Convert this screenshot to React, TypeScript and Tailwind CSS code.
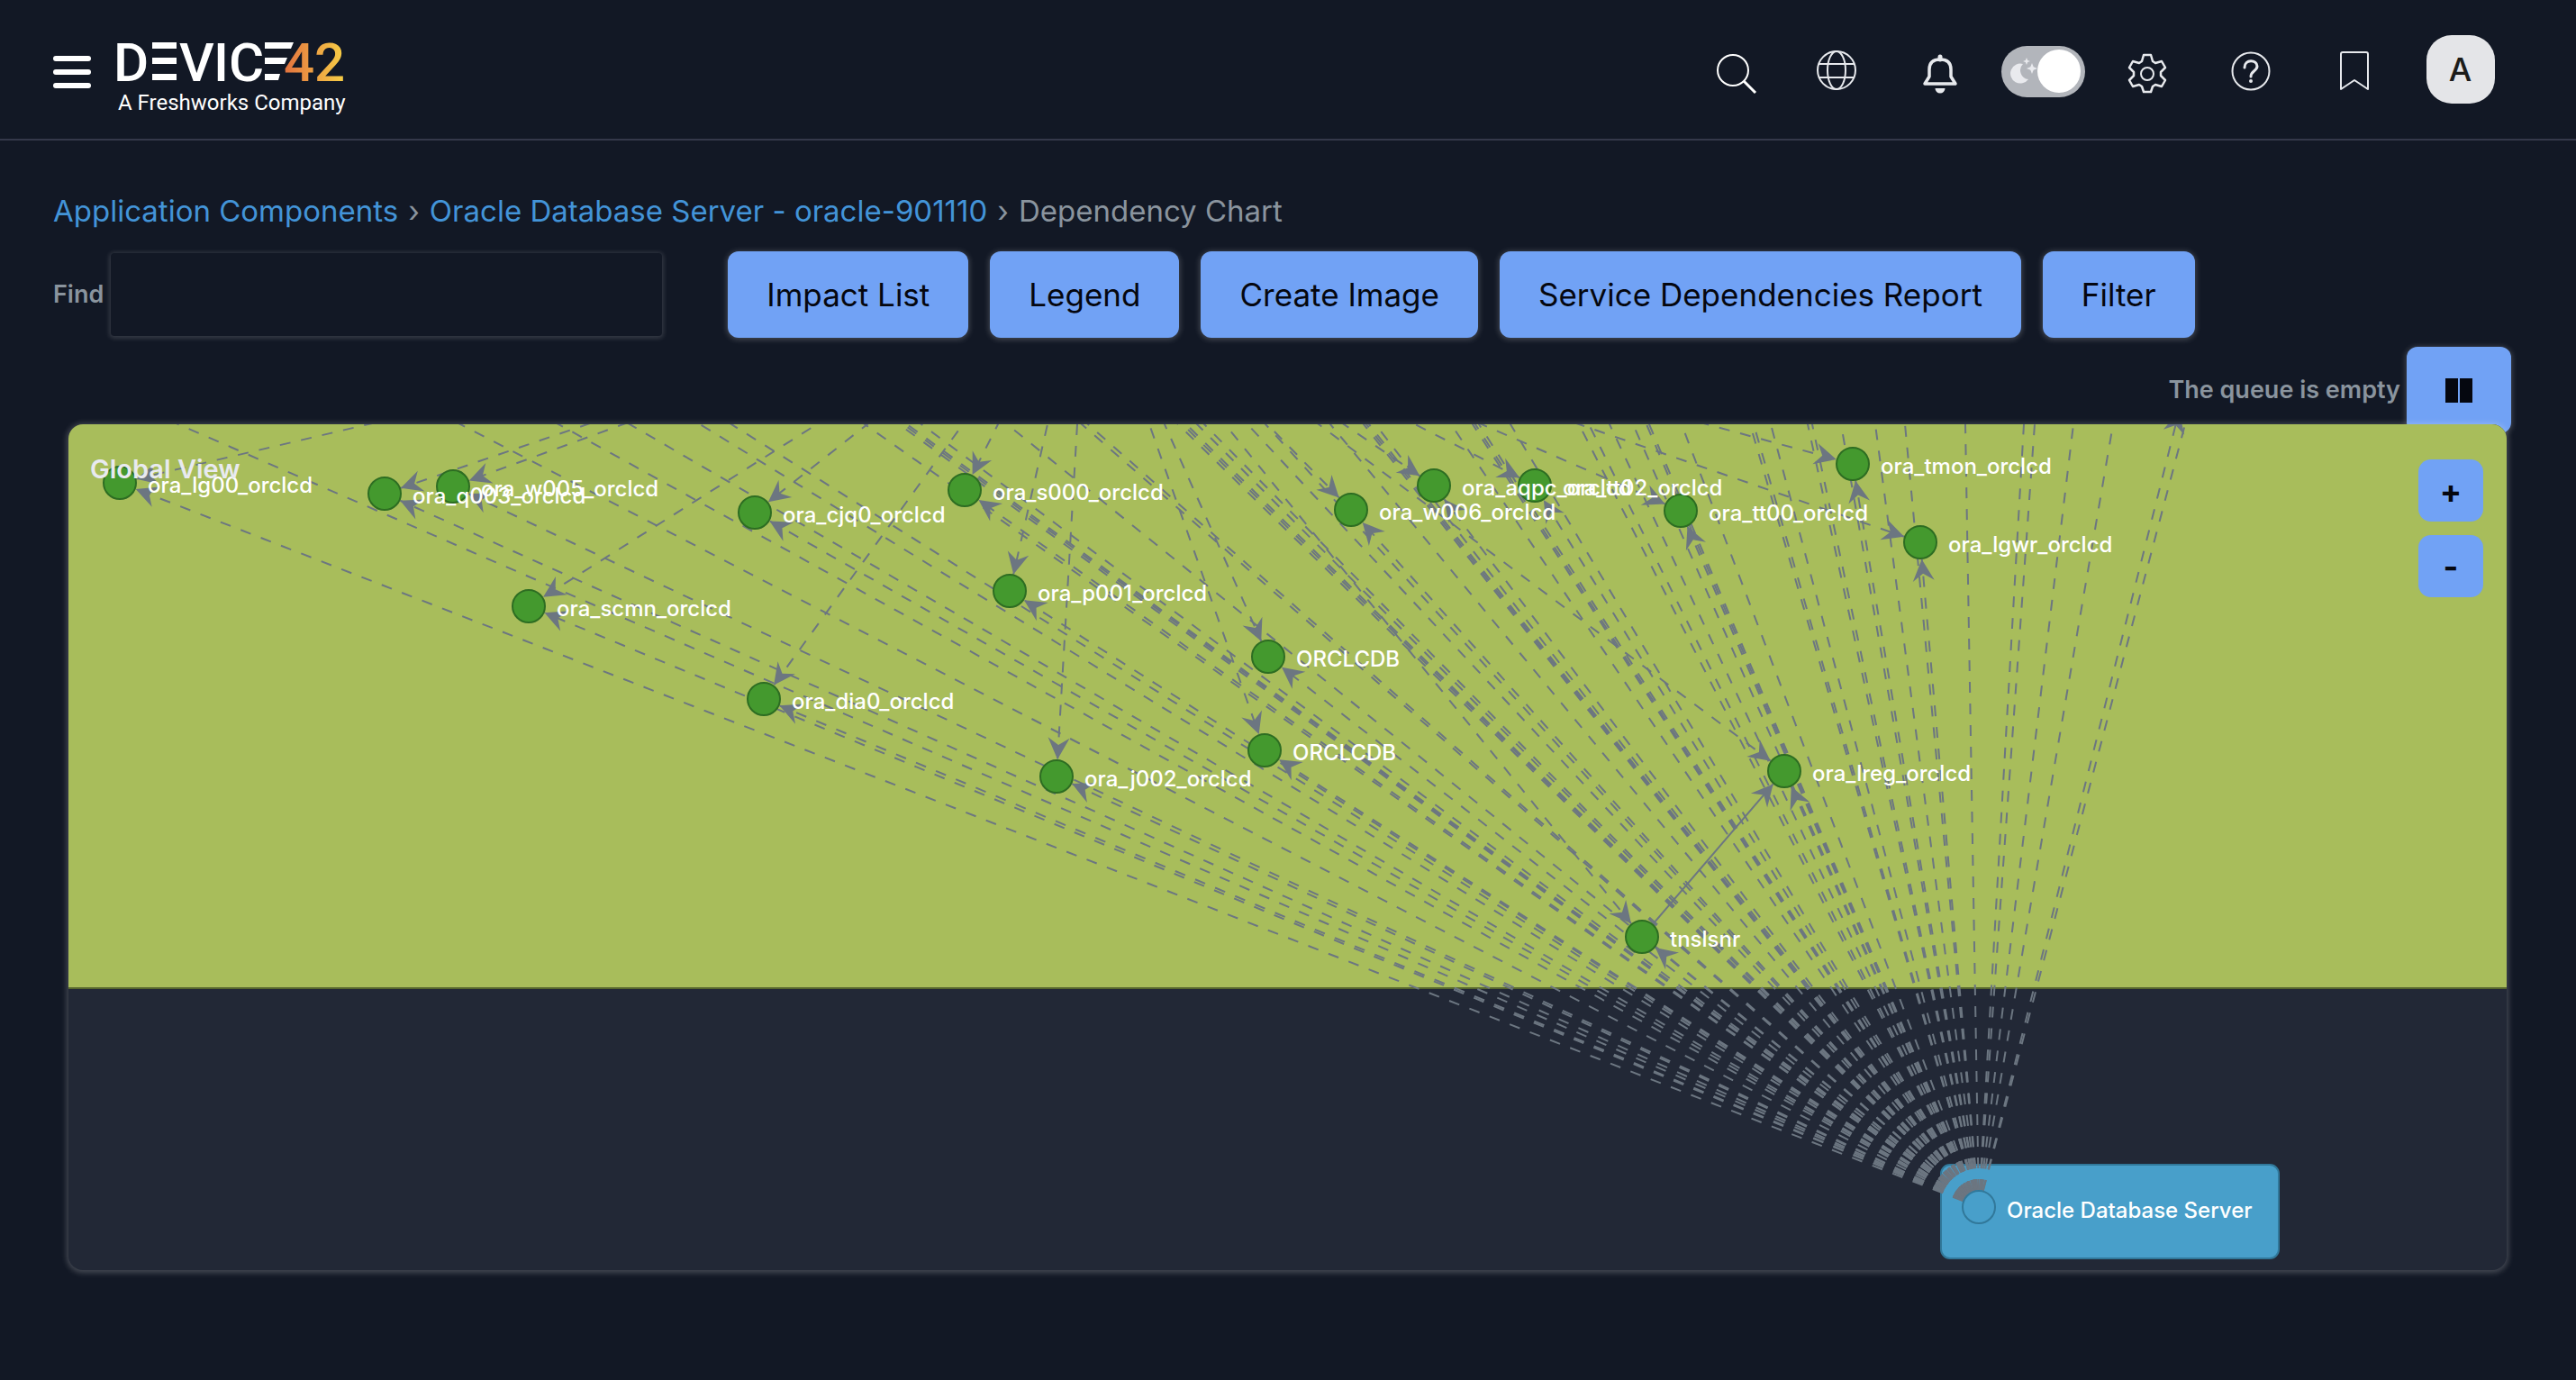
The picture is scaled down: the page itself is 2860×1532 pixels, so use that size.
import React from "react";

type Point = { x: number; y: number };
type GraphNode = Point & { label: string; from?: number };

const TOP = 471;
const RADIUS = 19;
const SERVER: Point = { x: 2197, y: 1340 };

// `from` is where the incoming peer connection crosses the top edge of the view.
const NODES: GraphNode[] = [
  { x: 133, y: 536, label: "ora_lg00_orclcd", from: 409 },
  { x: 427, y: 548, label: "ora_q003_orclcd", from: 652 },
  { x: 503, y: 540, label: "ora_w005_orclcd", from: 692 },
  { x: 587, y: 673, label: "ora_scmn_orclcd", from: 907 },
  { x: 838, y: 569, label: "ora_cjq0_orclcd", from: 963 },
  { x: 848, y: 776, label: "ora_dia0_orclcd", from: 1069 },
  { x: 1071, y: 544, label: "ora_s000_orclcd", from: 1108 },
  { x: 1121, y: 656, label: "ora_p001_orclcd", from: 1163 },
  { x: 1173, y: 862, label: "ora_j002_orclcd", from: 1196 },
  { x: 1408, y: 729, label: "ORCLCDB", from: 1293 },
  { x: 1404, y: 833, label: "ORCLCDB", from: 1276 },
  { x: 1500, y: 566, label: "ora_w006_orclcd", from: 1407 },
  { x: 1592, y: 539, label: "ora_aqpc_orclcd", from: 1492 },
  { x: 1704, y: 539, label: "ora_tt02_orclcd", from: 1571 },
  { x: 1866, y: 567, label: "ora_tt00_orclcd", from: 1645 },
  { x: 2057, y: 515, label: "ora_tmon_orclcd", from: 1895 },
  { x: 2132, y: 602, label: "ora_lgwr_orclcd", from: 1753 },
  { x: 1981, y: 856, label: "ora_lreg_orclcd", from: 1464 },
  { x: 1823, y: 1040, label: "tnslsnr", from: 1360 },
];

// Server connections whose far end lies above the visible area.
const OFFSCREEN_RAYS = [
  198, 511, 620, 699, 777, 812, 960, 998, 1003, 1007, 1023, 1118, 1201, 1208,
  1308, 1313, 1317, 1329, 1337, 1385, 1405, 1477, 1514, 1517, 1520, 1527, 1611,
  1635, 1638, 1642, 1677, 1753, 1764, 1787, 1813, 1828, 1831, 1867, 1943, 1947,
  1966, 2007, 2012, 2044, 2082, 2115, 2182, 2247, 2259, 2302, 2346, 2426,
];

const LREG = NODES[17];
const TNSLSNR = NODES[18];

function along(a: Point, b: Point, fromA: number): Point {
  const len = Math.hypot(b.x - a.x, b.y - a.y);
  return { x: a.x + ((b.x - a.x) / len) * fromA, y: a.y + ((b.y - a.y) / len) * fromA };
}

function extend(a: Point, b: Point, factor: number): Point {
  return { x: a.x + (b.x - a.x) * factor, y: a.y + (b.y - a.y) * factor };
}

function Edge({ from, to, arrow = true, solid = false }: { from: Point; to: Point; arrow?: boolean; solid?: boolean }) {
  const len = Math.hypot(to.x - from.x, to.y - from.y);
  const ux = (to.x - from.x) / len;
  const uy = (to.y - from.y) / len;
  const start = along(from, to, RADIUS);
  const tip = { x: to.x - ux * RADIUS, y: to.y - uy * RADIUS };
  const at = (back: number, side: number) =>
    `${tip.x - ux * back - uy * side},${tip.y - uy * back + ux * side}`;
  return (
    <g>
      <line
        x1={start.x}
        y1={start.y}
        x2={tip.x}
        y2={tip.y}
        stroke="#6c7681"
        strokeWidth={2}
        strokeDasharray={solid ? undefined : "12 12"}
      />
      {arrow && <polygon points={`${at(0, 0)} ${at(24, 12)} ${at(16, 0)} ${at(24, -12)}`} fill="#6c7681" />}
    </g>
  );
}

function DependencyGraph() {
  return (
    <svg
      viewBox="76 471 2707 939"
      preserveAspectRatio="xMinYMin slice"
      className="block h-[939px] w-full"
      role="img"
      aria-label="Dependency chart"
    >
      <rect x={70} y={460} width={2720} height={637} fill="#a8bd5b" stroke="#56662e" strokeWidth={2} />
      <rect x={2155} y={1293} width={375} height={104} rx={10} fill="#489fca" stroke="#31789a" strokeWidth={2} />
      {NODES.map((n, i) => (
        <Edge key={`s${i}`} from={SERVER} to={n} />
      ))}
      {OFFSCREEN_RAYS.map((x) => (
        <Edge key={x} from={SERVER} to={extend(SERVER, { x, y: TOP }, 1.1)} arrow={false} />
      ))}
      <Edge from={SERVER} to={{ x: 2424, y: 438 }} />
      {NODES.map((n, i) =>
        n.from ? <Edge key={`p${i}`} from={extend(n, { x: n.from, y: TOP }, 1.6)} to={n} /> : null,
      )}
      <Edge from={TNSLSNR} to={LREG} solid />
      {NODES.map((n, i) => (
        <circle key={i} cx={n.x} cy={n.y} r={18} fill="#44992e" stroke="#2d6d22" strokeWidth={2} />
      ))}
      <circle cx={SERVER.x} cy={SERVER.y} r={18} fill="#489fca" stroke="#31789a" strokeWidth={2} />
      <g className="font-['Inter',sans-serif] text-[24px] font-medium" fill="#ffffff">
        {NODES.map((n, i) => (
          <text key={i} x={n.x + 31} y={n.y + 11}>
            {n.label}
          </text>
        ))}
        <text x={2228} y={1352}>
          Oracle Database Server
        </text>
      </g>
    </svg>
  );
}

function Logo() {
  return (
    <a href="#" aria-label="Device42, A Freshworks Company" className="flex flex-col text-white">
      <svg viewBox="0 0 252 46" className="h-[46px] w-[252px] overflow-visible" fill="#ffffff">
        <defs>
          <linearGradient id="fortytwo" x1="0" x2="1" y1="0" y2="0">
            <stop offset="0" stopColor="#e2713f" />
            <stop offset="1" stopColor="#f8d046" />
          </linearGradient>
        </defs>
        <g className="font-['Roboto',sans-serif] text-[60px] font-medium">
          <text x="-5" y="44">D</text>
          <text x="68" y="44">V</text>
          <text x="106" y="44">I</text>
          <text x="123" y="44">C</text>
          <text x="184" y="44" fill="url(#fortytwo)">42</text>
        </g>
        <path d="M38 1h27v7H38zM38 18h27v7H38zM38 36h27v7H38z" />
        <path d="M163 1h32l-3 7h-29zM163 18h25l-3 7h-22zM163 36h17l-2 7h-15z" />
      </svg>
      <span className="pt-[5px] font-['Roboto',sans-serif] text-[24px] leading-[34px]">A Freshworks Company</span>
    </a>
  );
}

function IconButton({ label, children }: { label: string; children: React.ReactNode }) {
  return (
    <button type="button" aria-label={label} className="flex w-[115px] justify-center">
      <svg viewBox="0 0 44 52" className="h-[52px] w-[44px] overflow-visible" fill="none" stroke="#e7e9ed" strokeWidth={2}>
        {children}
      </svg>
    </button>
  );
}

function Header() {
  return (
    <header className="flex h-[156px] items-center justify-between border-b-2 border-[#34384a] pr-[68px] pl-[59px]">
      <div className="flex items-center gap-[30px] pt-[6px]">
        <button type="button" aria-label="Menu" className="flex w-[42px] flex-col gap-[9px]">
          <span className="h-[6px] rounded-full bg-white" />
          <span className="h-[6px] rounded-full bg-white" />
          <span className="h-[6px] rounded-full bg-white" />
        </button>
        <div className="pt-[16px]">
          <Logo />
        </div>
      </div>
      <div className="flex items-center">
        <IconButton label="Search">
          <circle cx="22" cy="27" r="17" stroke="#fff" />
          <path d="M34 39l13 13" stroke="#fff" strokeWidth={3} />
        </IconButton>
        <IconButton label="Language">
          <circle cx="22" cy="27" r="21" />
          <ellipse cx="22" cy="27" rx="10" ry="21" />
          <path d="M2 20h40M2 35h40" />
        </IconButton>
        <IconButton label="Notifications">
          <path d="M22 12v3" strokeWidth={5} strokeLinecap="round" />
          <path d="M5 42L10 34V26C10 18 15 15 22 15S34 18 34 26V34L39 42Z" strokeWidth={3.500} strokeLinejoin="round" />
          <path d="M16.500 47h11a5.500 5.500 0 0 1-11 0z" fill="#e7e9ed" stroke="none" />
        </IconButton>
        <label className="flex w-[115px] justify-center">
          <input type="checkbox" role="switch" aria-label="Dark mode" defaultChecked className="sr-only" />
          <span className="mt-[4px] flex h-[57px] w-[93px] items-center justify-between rounded-full bg-[#b2b5bb] pr-[5px] pl-[10px]">
            <svg viewBox="0 0 30 30" className="h-[30px] w-[30px]" fill="#e9eaee">
              <path d="M14 7a11 11 0 1 0 6 17a10 10 0 0 1-6-17z" />
              <path d="M18 0l1.200 3L22 4l-2.800 1L18 8l-1.200-3L14 4l2.800-1zM24 6l1.700 4.300L30 12l-4.300 1.700L24 18l-1.700-4.300L18 12l4.300-1.700z" />
            </svg>
            <span className="h-[48px] w-[48px] rounded-full bg-white" />
          </span>
        </label>
        <IconButton label="Settings">
          <circle cx="22" cy="31" r="7" />
          <path
            strokeWidth={2.500}
            strokeLinejoin="round"
            d="M18 10H26L28 17L31 19L38 17L42 24L37 29V33L42 38L38 45L31 43L28 45L26 51H18L16 45L13 43L6 45L2 38L7 33V29L2 24L6 17L13 19L16 17Z"
          />
        </IconButton>
        <IconButton label="Help">
          <circle cx="22" cy="28" r="20.500" />
          <path d="M15 24C15 14 29 15 29 22.500C29 28 22 27.500 22 34" strokeWidth={3} strokeLinecap="round" />
          <circle cx="22" cy="39" r="2" fill="#e7e9ed" stroke="none" />
        </IconButton>
        <IconButton label="Bookmarks">
          <path d="M7 48V9a2 2 0 0 1 2-2h26a2 2 0 0 1 2 2V48L22 38Z" strokeLinejoin="round" />
        </IconButton>
        <div className="flex w-[121px] justify-center">
          <button
            type="button"
            aria-label="Account"
            className="h-[76px] w-[76px] rounded-[28px] bg-[#e4e5e8] text-[36px] font-medium text-[#1c1c1a]"
          >
            A
          </button>
        </div>
      </div>
    </header>
  );
}

function ActionButton({ children }: { children: React.ReactNode }) {
  return (
    <button
      type="button"
      className="h-[96px] rounded-[12px] bg-[#71a2f5] px-[43px] text-[35px] whitespace-nowrap text-[#05070f] shadow-[0_1px_6px_1px_rgba(255,255,255,0.22)]"
    >
      {children}
    </button>
  );
}

const ACTIONS = ["Impact List", "Legend", "Create Image", "Service Dependencies Report", "Filter"];

export default function App() {
  return (
    <div className="min-h-screen bg-[#121825] font-['Inter',sans-serif] text-[#8a949e]">
      <Header />
      <nav aria-label="Breadcrumb" className="flex gap-[11px] px-[59px] pt-[58px] text-[33px] leading-[40px]">
        <a href="#" className="text-[#4394d8]">Application Components</a>
        <span>›</span>
        <a href="#" className="text-[#4394d8]">Oracle Database Server - oracle-901110</a>
        <span>›</span>
        <span>Dependency Chart</span>
      </nav>
      <div className="flex items-center gap-[24px] px-[59px] pt-[25px]">
        <div className="mr-[49px] flex items-center gap-[8px]">
          <label htmlFor="find" className="text-[27px] font-semibold">Find</label>
          <input
            id="find"
            type="text"
            className="h-[92px] w-[612px] rounded-[4px] bg-[#121825] px-4 text-[27px] shadow-[0_1px_5px_2px_rgba(255,255,255,0.14)] outline-none"
          />
        </div>
        {ACTIONS.map((a) => (
          <ActionButton key={a}>{a}</ActionButton>
        ))}
      </div>
      <div className="flex items-center justify-end gap-[7px] pt-[10px] pr-[72px]">
        <span className="text-[27px] font-semibold">The queue is empty</span>
        <button
          type="button"
          aria-label="Pause"
          className="flex h-[96px] w-[116px] items-center justify-center gap-[2px] rounded-[12px] bg-[#71a2f5] shadow-[0_1px_6px_1px_rgba(255,255,255,0.22)]"
        >
          <span className="h-[27px] w-[14px] bg-[#05070f]" />
          <span className="h-[27px] w-[14px] bg-[#05070f]" />
        </button>
      </div>
      <main className="relative -mt-[10px] mr-[77px] ml-[76px] rounded-[16px] bg-[#222836] shadow-[0_1px_6px_2px_rgba(255,255,255,0.22)]">
        <div className="overflow-hidden rounded-[16px]">
          <DependencyGraph />
        </div>
        <h1 className="absolute top-[32px] left-[24px] text-[29px] leading-[36px] font-semibold text-[#e8eaf0]">Global View</h1>
        <div className="absolute top-[39px] right-[26px] flex flex-col gap-[15px] text-[36px] leading-none font-bold text-[#05070f]">
          <button type="button" aria-label="Zoom in" className="h-[69px] w-[72px] rounded-[14px] bg-[#71a2f5]">+</button>
          <button type="button" aria-label="Zoom out" className="h-[69px] w-[72px] rounded-[14px] bg-[#71a2f5]">-</button>
        </div>
      </main>
    </div>
  );
}
